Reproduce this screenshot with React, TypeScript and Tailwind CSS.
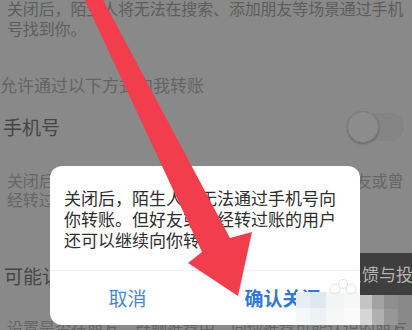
import { FC } from 'react';

const mosaic: { x: number; y: number; w: number; h: number; c: string }[] = [
  { x: 296, y: 292, w: 14, h: 16, c: '#e9eef6' },
  { x: 310, y: 292, w: 16, h: 16, c: '#dfe7f2' },
  { x: 326, y: 292, w: 18, h: 16, c: '#f3f4f6' },
  { x: 344, y: 292, w: 16, h: 16, c: '#f7f7f7' },
  { x: 296, y: 308, w: 14, h: 17, c: '#f4f6fa' },
  { x: 310, y: 308, w: 16, h: 17, c: '#eef1f6' },
  { x: 326, y: 308, w: 18, h: 17, c: '#f6f6f6' },
  { x: 344, y: 308, w: 16, h: 17, c: '#fafafa' },
  { x: 360, y: 295, w: 12, h: 14, c: '#c4c4c4' },
  { x: 372, y: 295, w: 12, h: 14, c: '#a2a2a2' },
  { x: 384, y: 295, w: 14, h: 14, c: '#8f8f8f' },
  { x: 360, y: 309, w: 12, h: 16, c: '#d6d6d6' },
  { x: 372, y: 309, w: 12, h: 16, c: '#b0b0b0' },
  { x: 384, y: 309, w: 14, h: 16, c: '#979797' },
];

const App: FC = () => {
  return (
    <div
      className="relative w-[412px] h-[330px] overflow-hidden bg-[#898989] text-[#5d5d5d]"
      style={{ fontFamily: '"Noto Sans CJK SC", "Noto Sans", sans-serif' }}
    >
      {/* page under the dim layer */}
      <div className="pl-[7px] -mt-[2px] text-[16px] leading-[20px] tracking-[-0.15px] whitespace-nowrap">
        <div>关闭后，陌生人将无法在搜索、添加朋友等场景通过手机</div>
        <div>号找到你。</div>
      </div>

      <div className="mt-[36px] text-[17px] leading-[22px] text-[#646464] whitespace-nowrap">
        允许通过以下方式向我转账
      </div>

      <div className="mt-[11px] h-[40px] pl-[3px] pr-[8px] flex items-center justify-between">
        <span className="text-[19px] leading-[24px] text-[#454545]">手机号</span>
        <div className="relative w-[57px] h-[32px]">
          <div className="absolute left-[2px] right-0 top-[2px] bottom-[2px] rounded-full bg-[#848484]" />
          <div className="absolute left-0 top-0 w-[32px] h-[32px] rounded-full bg-[#8c8c8c] border border-[#7c7c7c] shadow-[0_1px_2px_rgba(0,0,0,0.25)]" />
        </div>
      </div>

      <div className="mt-[24px] pl-[7px] text-[16px] leading-[19px] tracking-[-0.15px] text-[#666666] whitespace-nowrap">
        <div>关闭后，陌生人将无法通过手机号向你转账，但好友或曾</div>
        <div>经转过账的用户还可以继续向你转账。</div>
      </div>

      <div className="mt-[55px] pl-[4px] text-[19px] leading-[24px] text-[#454545] whitespace-nowrap">
        可能认识的人
      </div>

      <div className="mt-[29px] pl-[7px] text-[16px] leading-[20px] text-[#666666] whitespace-nowrap">
        设置是否在朋友、群聊推荐中，向你推荐可能认识的朋友
      </div>

      {/* feedback strip on the right */}
      <div className="absolute left-[330px] top-[253px] w-[100px] h-[42px] bg-[#3e3e3e] flex items-center pl-[15px] text-[17px] text-[#b3b3b3] whitespace-nowrap">
        反馈与投诉
      </div>

      {/* dialog */}
      <div className="absolute left-[50px] top-[166px] w-[310px] h-[159px] rounded-[12px] bg-white flex flex-col">
        <p className="pt-[21px] px-[14px] text-[17px] leading-[21px] text-[#2e2e2e]">
          关闭后，陌生人将无法通过手机号向你转账。但好友或曾经转过账的用户还可以继续向你转账。
        </p>
        <div className="mt-auto h-[55px] border-t border-[#f0f0f0] flex">
          <div className="flex-1 flex items-center justify-center text-[19px] text-[#4a86cf]">取消</div>
          <div className="flex-1 flex items-center justify-center text-[19px] font-bold text-[#2f78d6]">
            确认关闭
          </div>
        </div>
      </div>

      {/* pixelated watermark */}
      {mosaic.map((b, i) => (
        <div
          key={i}
          className="absolute"
          style={{ left: b.x, top: b.y, width: b.w, height: b.h, background: b.c }}
        />
      ))}
      <svg className="absolute left-[328px] top-[278px]" width="30" height="18" viewBox="0 0 30 18">
        <g fill="none" stroke="#e4e4e4" strokeWidth="1">
          <circle cx="7" cy="11" r="5" />
          <circle cx="15" cy="6" r="4.5" />
          <circle cx="23" cy="11" r="5" />
        </g>
      </svg>

      {/* red arrow annotation */}
      <svg className="absolute inset-0 pointer-events-none" width="412" height="330" viewBox="0 0 412 330">
        <polygon
          points="83,-4 101,-4 230,238 252,232 238,296 188,263 202,252"
          fill="#f23d4d"
        />
      </svg>
    </div>
  );
};

export default App;
